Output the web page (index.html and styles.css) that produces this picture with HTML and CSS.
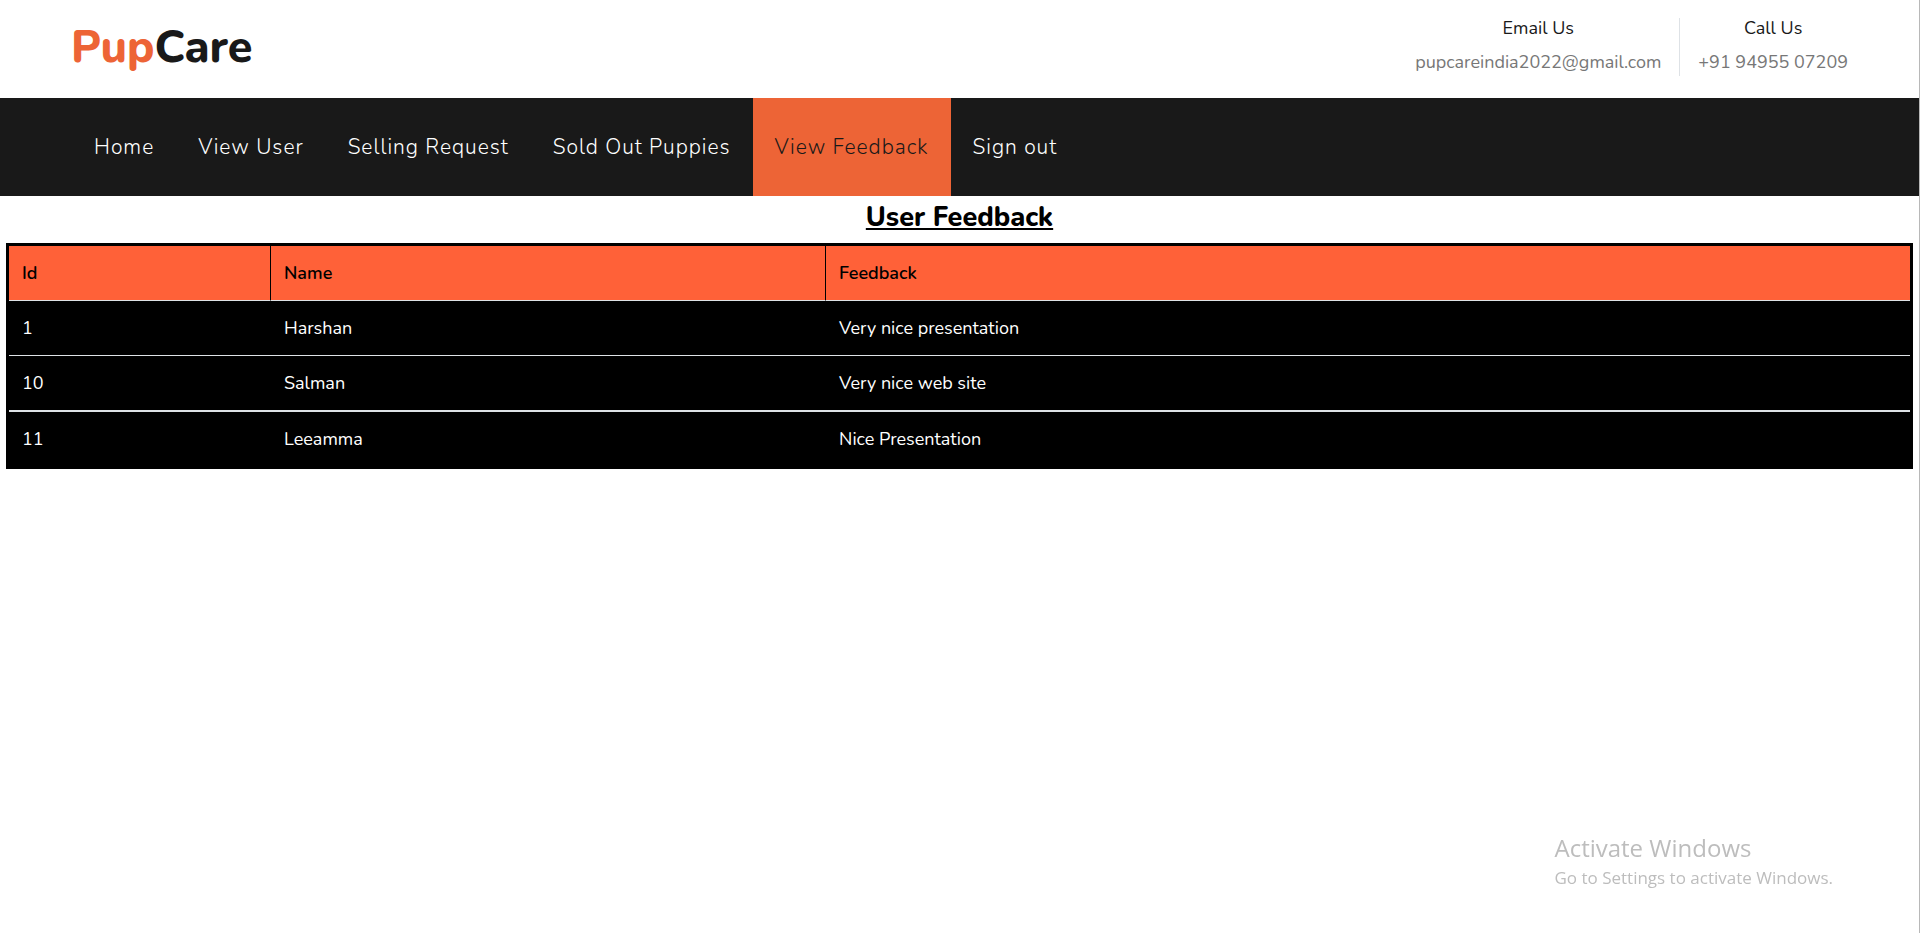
FILE: index.html
```html
<!DOCTYPE html>
<html lang="en">
<head>
<meta charset="utf-8">
<meta name="viewport" content="width=device-width, initial-scale=1">
<title>PupCare - User Feedback</title>
<link rel="stylesheet" href="styles.css">
</head>
<body>
<header class="topbar">
  <a class="logo" href="#"><span class="logo-accent">Pup</span>Care</a>
  <div class="contacts">
    <div class="contact">
      <h2 class="contact-title">Email Us</h2>
      <p class="contact-text">pupcareindia2022@gmail.com</p>
    </div>
    <div class="contact">
      <h2 class="contact-title">Call Us</h2>
      <p class="contact-text">+91 94955 07209</p>
    </div>
  </div>
</header>
<nav class="navbar" aria-label="Main">
  <a class="nav-link" href="#">Home</a>
  <a class="nav-link" href="#">View User</a>
  <a class="nav-link" href="#">Selling Request</a>
  <a class="nav-link" href="#">Sold Out Puppies</a>
  <a class="nav-link active" href="#" aria-current="page">View Feedback</a>
  <a class="nav-link" href="#">Sign out</a>
</nav>
<main class="content">
  <h1 class="title">User Feedback</h1>
  <table class="feedback">
    <colgroup><col class="col-id"><col class="col-name"><col></colgroup>
    <thead>
      <tr><th scope="col">Id</th><th scope="col">Name</th><th scope="col">Feedback</th></tr>
    </thead>
    <tbody>
      <tr><td>1</td><td>Harshan</td><td>Very nice presentation</td></tr>
      <tr><td>10</td><td>Salman</td><td>Very nice web site</td></tr>
      <tr><td>11</td><td>Leeamma</td><td>Nice Presentation</td></tr>
    </tbody>
  </table>
</main>
<aside class="watermark">
  <p class="watermark-title">Activate Windows</p>
  <p class="watermark-text">Go to Settings to activate Windows.</p>
</aside>
</body>
</html>
```
FILE: styles.css
```css
* { box-sizing: border-box; }

body {
  margin: 0;
  min-height: 100vh;
  border-right: 1px solid #b8b8b8;
  background: #fff;
  color: #000;
  font-family: Nunito, Lato, sans-serif;
  font-size: 18px;
  line-height: 26px;
}

h1, h2, p { margin: 0; }
a { text-decoration: none; }

.topbar {
  display: flex;
  justify-content: space-between;
  align-items: flex-start;
  padding: 18px 71px 20px;
}

.logo {
  color: #191919;
  font-size: 45px;
  font-weight: 800;
  line-height: 60px;
}
.logo-accent { color: #ed6436; }

.contacts { display: flex; gap: 18px; }
.contact { text-align: center; }
.contact + .contact { padding-left: 18px; border-left: 1px solid #dee2e6; }
.contact-title {
  margin-bottom: 10px;
  color: #191919;
  font-size: 18px;
  font-weight: 400;
  line-height: 20px;
}
.contact-text { color: #777; line-height: 28px; }

.navbar { display: flex; padding: 0 72px; background: #191919; }
.nav-link {
  padding: 34px 22px;
  color: #fff;
  font-size: 21px;
  font-weight: 300;
  letter-spacing: 1px;
  line-height: 30px;
}
.nav-link.active { background: #ed6436; color: #191919; }

.content { padding: 0 6px; }
.title {
  padding: 2px 0 5px;
  font-size: 27px;
  font-weight: 800;
  line-height: 40px;
  text-align: center;
  text-decoration: underline;
}

.feedback {
  width: 100%;
  border: 3px solid #000;
  border-spacing: 0;
  table-layout: fixed;
  background: #000;
}
.col-id { width: 262px; }
.col-name { width: 29.2%; }
.feedback th, .feedback td {
  padding: 14px 13px;
  border-bottom: 1px solid #dee2e6;
  text-align: left;
}
.feedback th {
  border-right: 1px solid #000;
  background: #ff6138;
  font-weight: 600;
}
.feedback th:last-child { border-right: 0; }
.feedback td { color: #fff; }
.feedback tbody tr:nth-child(2) td { border-bottom-width: 2px; }
.feedback tbody tr:last-child td { border-bottom: 0; }

.watermark {
  position: fixed;
  right: 87px;
  bottom: 42px;
  color: #bdbdbd;
  font-family: "Segoe UI", "Open Sans", sans-serif;
}
.watermark-title { font-size: 24px; line-height: 34px; }
.watermark-text { font-size: 17px; line-height: 26px; }
```
